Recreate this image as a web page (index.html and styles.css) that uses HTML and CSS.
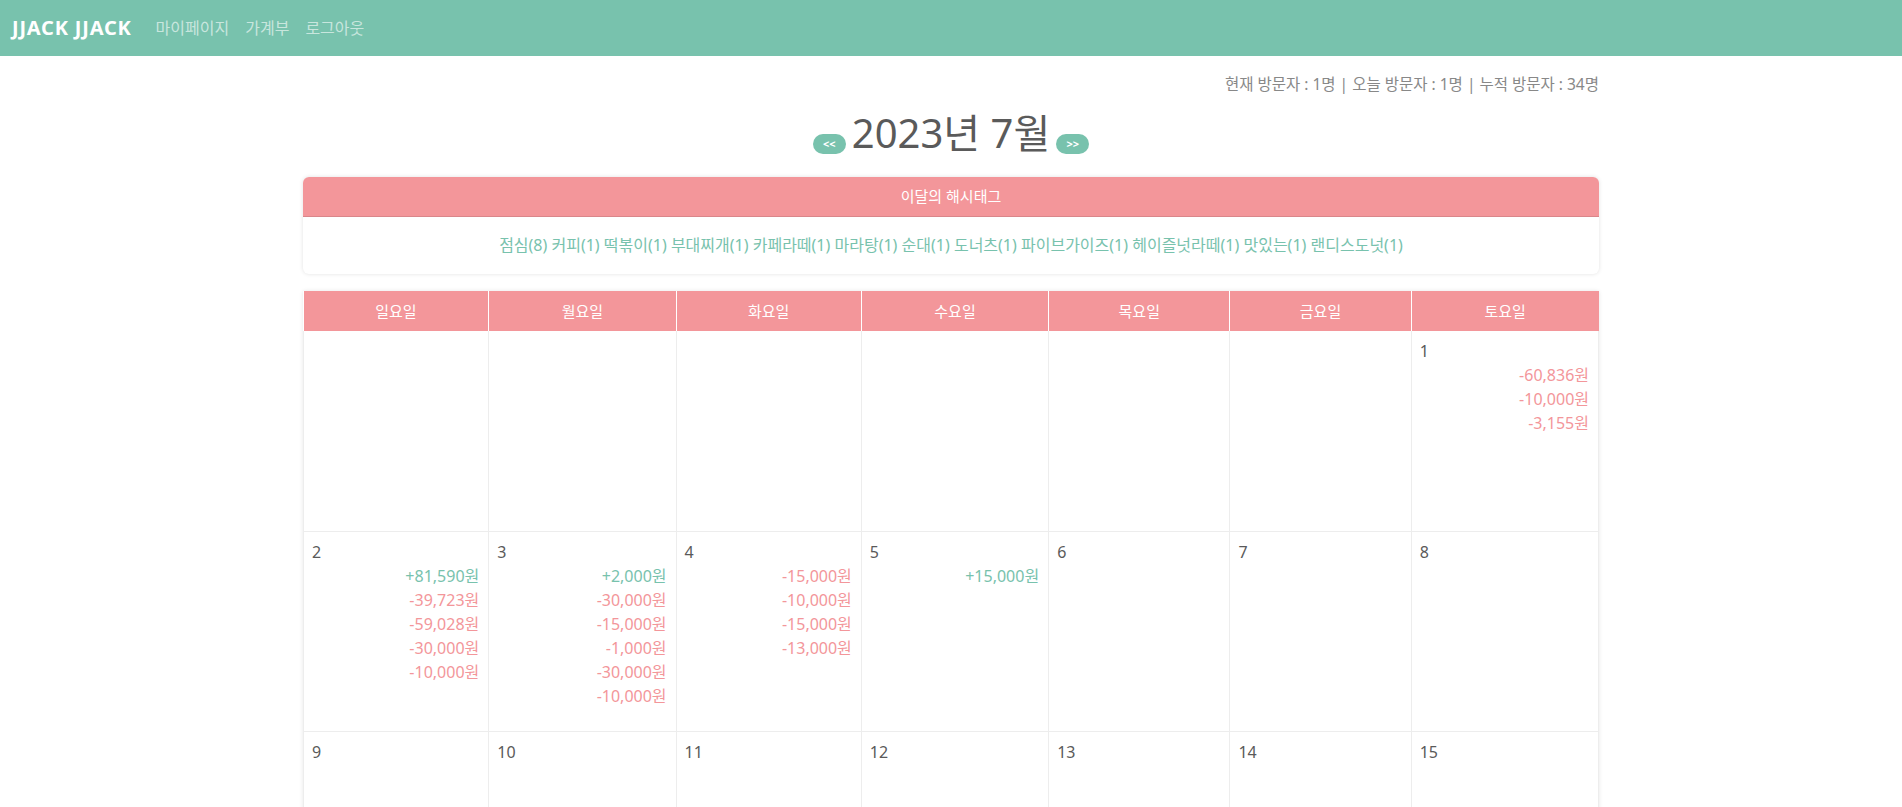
FILE: index.html
```html
<!DOCTYPE html>
<html lang="ko">
<head>
<meta charset="utf-8">
<title>JJACK JJACK</title>
<link rel="stylesheet" href="styles.css">
</head>
<body>
<nav class="navbar">
  <a class="brand" href="#">JJACK JJACK</a>
  <a class="nav-link" href="#">마이페이지</a>
  <a class="nav-link" href="#">가계부</a>
  <a class="nav-link" href="#">로그아웃</a>
</nav>
<main class="container">
  <div class="visitors">현재 방문자 : 1명 | 오늘 방문자 : 1명 | 누적 방문자 : 34명</div>
  <h1 class="title">
    <button class="month-btn">&lt;&lt;</button>
    <span class="title-text">2023년 7월</span>
    <button class="month-btn">&gt;&gt;</button>
  </h1>
  <section class="card">
    <div class="card-header">이달의 해시태그</div>
    <div class="card-body">점심(8) 커피(1) 떡볶이(1) 부대찌개(1) 카페라떼(1) 마라탕(1) 순대(1) 도너츠(1) 파이브가이즈(1) 헤이즐넛라떼(1) 맛있는(1) 랜디스도넛(1)</div>
  </section>
  <table class="calendar">
    <colgroup>
      <col class="col-a"><col class="col-b"><col class="col-a"><col class="col-b"><col class="col-c"><col class="col-c"><col class="col-b">
    </colgroup>
    <thead>
      <tr><th>일요일</th><th>월요일</th><th>화요일</th><th>수요일</th><th>목요일</th><th>금요일</th><th>토요일</th></tr>
    </thead>
    <tbody>
      <tr>
        <td></td><td></td><td></td><td></td><td></td><td></td>
        <td><div class="day">1</div><div class="amt minus">-60,836원</div><div class="amt minus">-10,000원</div><div class="amt minus">-3,155원</div></td>
      </tr>
      <tr>
        <td><div class="day">2</div><div class="amt plus">+81,590원</div><div class="amt minus">-39,723원</div><div class="amt minus">-59,028원</div><div class="amt minus">-30,000원</div><div class="amt minus">-10,000원</div></td>
        <td><div class="day">3</div><div class="amt plus">+2,000원</div><div class="amt minus">-30,000원</div><div class="amt minus">-15,000원</div><div class="amt minus">-1,000원</div><div class="amt minus">-30,000원</div><div class="amt minus">-10,000원</div></td>
        <td><div class="day">4</div><div class="amt minus">-15,000원</div><div class="amt minus">-10,000원</div><div class="amt minus">-15,000원</div><div class="amt minus">-13,000원</div></td>
        <td><div class="day">5</div><div class="amt plus">+15,000원</div></td>
        <td><div class="day">6</div></td>
        <td><div class="day">7</div></td>
        <td><div class="day">8</div></td>
      </tr>
      <tr>
        <td><div class="day">9</div></td><td><div class="day">10</div></td><td><div class="day">11</div></td><td><div class="day">12</div></td><td><div class="day">13</div></td><td><div class="day">14</div></td><td><div class="day">15</div></td>
      </tr>
      <tr>
        <td><div class="day">16</div></td><td><div class="day">17</div></td><td><div class="day">18</div></td><td><div class="day">19</div></td><td><div class="day">20</div></td><td><div class="day">21</div></td><td><div class="day">22</div></td>
      </tr>
      <tr>
        <td><div class="day">23</div></td><td><div class="day">24</div></td><td><div class="day">25</div></td><td><div class="day">26</div></td><td><div class="day">27</div></td><td><div class="day">28</div></td><td><div class="day">29</div></td>
      </tr>
      <tr>
        <td><div class="day">30</div></td><td><div class="day">31</div></td><td></td><td></td><td></td><td></td><td></td>
      </tr>
    </tbody>
  </table>
</main>
</body>
</html>
```
FILE: styles.css
```css
* { box-sizing: border-box; }
body {
  margin: 0;
  font-family: "Noto Sans", "Noto Sans CJK KR", sans-serif;
  font-size: 16px;
  line-height: 1.5;
  color: #888;
  background: #fff;
}
a { text-decoration: none; }
.navbar {
  height: 56px;
  background: #78c2ad;
  display: flex;
  align-items: center;
  padding: 0 12px;
}
.brand {
  color: #fff;
  font-size: 20px;
  font-weight: 700;
  letter-spacing: 0.8px;
  margin-right: 24px;
}
.nav-link {
  color: rgba(255, 255, 255, 0.6);
  font-size: 16px;
  margin-right: 16px;
}
.container {
  width: 1296px;
  margin: 0 auto 40px;
}
.visitors {
  text-align: right;
  font-size: 15.5px;
  line-height: 24px;
  margin-top: 16px;
}
.title {
  margin: 13px 0 0;
  display: flex;
  justify-content: center;
  align-items: flex-end;
  gap: 6px;
  font-size: 40px;
  font-weight: 400;
  line-height: 48px;
  color: #5a5a5a;
}
.month-btn {
  width: 33px;
  height: 20px;
  margin-bottom: 3px;
  border: 0;
  border-radius: 10px;
  background: #78c2ad;
  color: #fff;
  font-family: inherit;
  font-size: 11px;
  font-weight: 700;
  line-height: 20px;
  padding: 0;
}
.card {
  margin-top: 20px;
  border-radius: 6px;
  overflow: hidden;
  box-shadow: 0 0 4px rgba(0, 0, 0, 0.12);
  background: #fff;
}
.card-header {
  height: 40px;
  background: #f3969a;
  border-bottom: 1px solid #d9868a;
  color: #fff;
  font-size: 15px;
  text-align: center;
  line-height: 39px;
}
.card-body {
  height: 57px;
  text-align: center;
  color: #78c2ad;
  font-size: 16px;
  line-height: 57px;
}
.calendar {
  margin-top: 17px;
  width: 100%;
  table-layout: fixed;
  border-collapse: collapse;
  box-shadow: 0 0 4px rgba(0, 0, 0, 0.1);
}
.col-a { width: 185px; }
.col-b { width: 187px; }
.col-c { width: 181px; }
.calendar th {
  height: 40px;
  background: #f3969a;
  color: #fff;
  font-weight: 400;
  font-size: 15px;
  border-left: 1px solid #fff;
}
.calendar th:first-child { border-left: 0; }
.calendar td {
  height: 200px;
  vertical-align: top;
  padding: 8px 9px 8px 8px;
  border: 1px solid #ededed;
  border-top: 0;
}
.day {
  color: #5a5a5a;
  font-size: 16px;
  line-height: 24px;
}
.amt {
  text-align: right;
  font-size: 16px;
  line-height: 24px;
}
.minus { color: #f3969a; }
.plus { color: #78c2ad; }
```
